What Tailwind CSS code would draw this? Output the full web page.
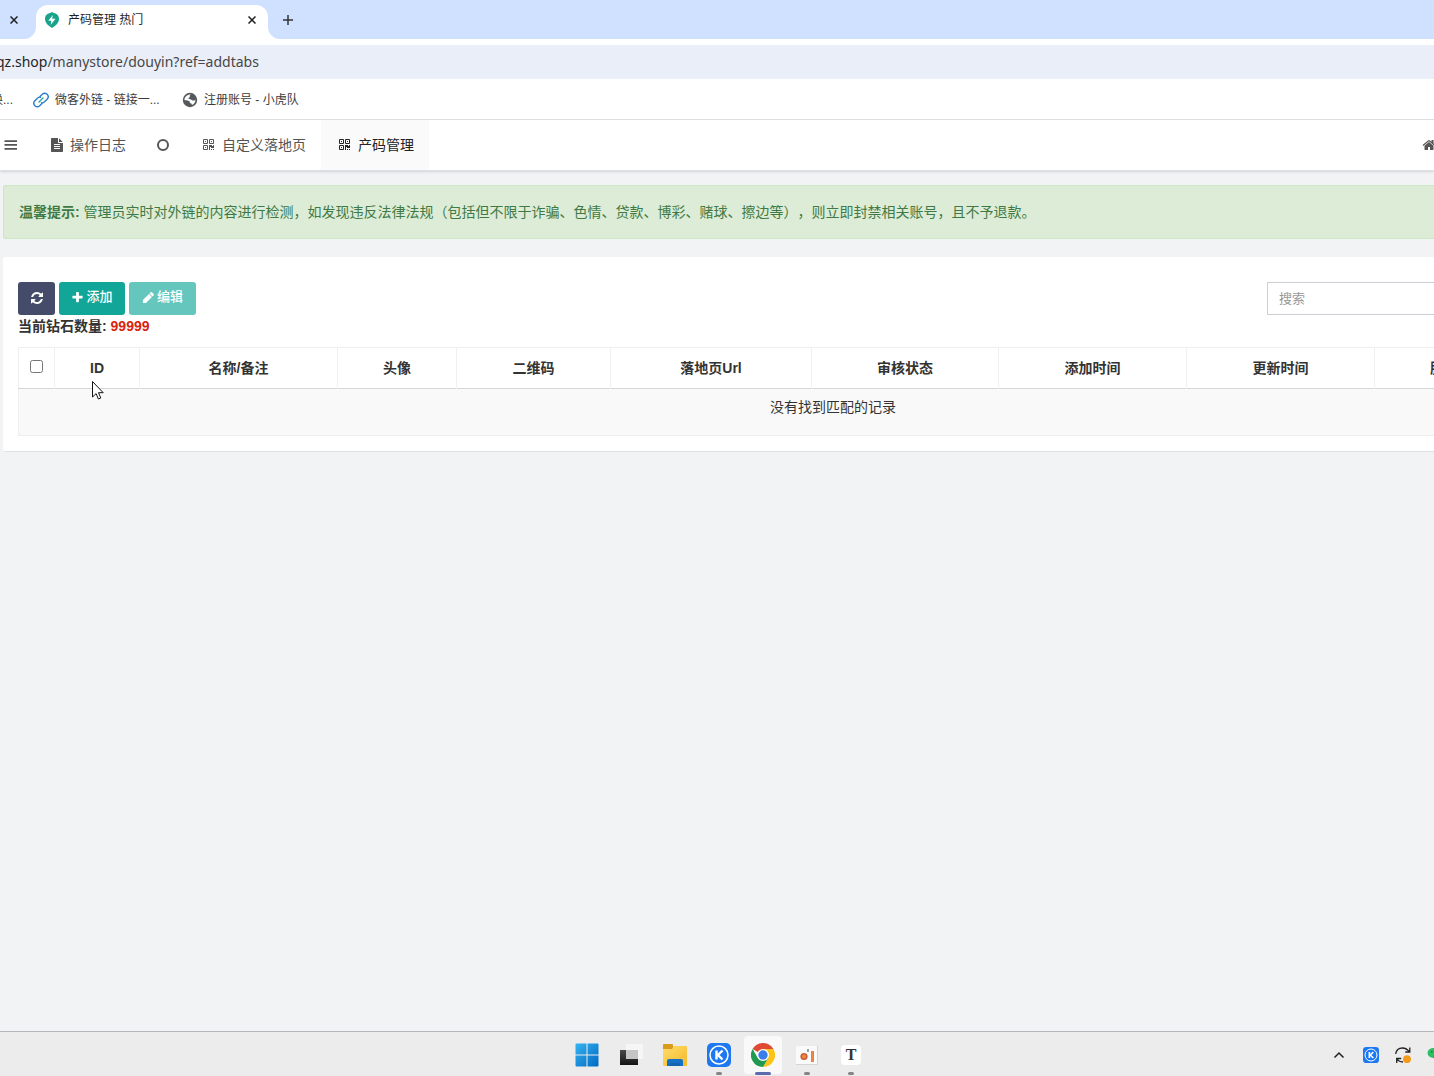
<!DOCTYPE html>
<html lang="zh-CN">
<head>
<meta charset="utf-8">
<title>产码管理 热门</title>
<script src="https://cdn.jsdelivr.net/npm/@tailwindcss/browser@4"></script>
</head>
<body class="flex h-screen flex-col overflow-hidden bg-[#f1f3f5] font-['Liberation_Sans','Noto_Sans_CJK_SC',sans-serif] text-sm text-[#333] [text-spacing-trim:space-all]">

<!-- icon set -->
<svg class="hidden" aria-hidden="true">
  <symbol id="qr" viewBox="0 0 12 12"><path fill="none" stroke="currentColor" d="M.5 .5h4v4h-4zM6.500 .5h4v4h-4zM.5 6.500h4v4h-4z"/><path fill="currentColor" d="M2 2h1v1H2zM8 2h1v1H8zM2 8h1v1H2zM6 6h3v1h1V6h1v3H8V8H7v3H6zM8 10h1v1H8zM10 10h1v1h-1z"/></symbol>
  <symbol id="close" viewBox="0 0 8 8"><path fill="none" stroke="currentColor" stroke-width="1.500" d="M.5 .5l7 7M7.500 .5l-7 7"/></symbol>
  <symbol id="kapp" viewBox="0 0 24 24"><rect width="24" height="24" rx="5" fill="#1e78f0"/><circle cx="12" cy="12" r="9" fill="none" stroke="#fff" stroke-width="1.500"/><path fill="none" stroke="#fff" stroke-width="2.400" d="M9.500 7.500v9M15.500 7.500L11 12l4.500 4.500"/></symbol>
</svg>

<header class="shrink-0">
  <!-- tab strip -->
  <div class="flex h-[39px] bg-white text-xs text-[#1f1f1f]">
    <div class="flex w-9 items-center rounded-br-xl bg-[#d0e1ff] pl-[10px]"><button aria-label="关闭上一标签"><svg class="size-2"><use href="#close"/></svg></button></div>
    <div class="flex w-[232px] bg-[#d0e1ff] pt-[5px] [background:linear-gradient(#d0e1ff_20px,#fff_20px)]">
      <div class="flex flex-1 items-center rounded-t-xl bg-white pb-[5px] pr-3 pl-2">
        <svg class="mr-2 h-4 w-4" viewBox="0 0 16 16"><path fill="#18a38b" d="M8 0l1.800 1C13 1.400 15 3.800 15 7c0 3.400-2.200 5.600-4.600 7.200L8 16l-2.400-1.800C3.200 12.600 1 10.400 1 7c0-3.200 2-5.600 5.200-6z"/><path fill="#fff" d="M8.800 3L4.300 8.800h3L6.700 13l4.800-6.200H8.200z"/></svg>
        <span class="flex-1">产码管理 热门</span>
        <button aria-label="关闭标签"><svg class="size-2"><use href="#close"/></svg></button>
      </div>
    </div>
    <div class="flex flex-1 rounded-bl-xl bg-[#d0e1ff] pl-[15px]">
      <button aria-label="新标签"><svg class="size-[10px]" viewBox="0 0 10 10"><path stroke="#333" stroke-width="1.500" d="M5 0v10M0 5h10"/></svg></button>
    </div>
  </div>
  <!-- address bar -->
  <div class="bg-white pt-[6px]">
    <div class="flex h-[34px] items-center overflow-hidden bg-[#e9eef8] font-['Noto_Sans',sans-serif] text-sm">
      <p class="-ml-1 whitespace-nowrap text-[#474747]"><span class="text-[#1f1f1f]">qz.shop</span>/manystore/douyin?ref=addtabs</p>
    </div>
  </div>
  <!-- bookmarks -->
  <nav class="flex h-[41px] items-center overflow-hidden border-b border-[#e0e2e6] bg-white pt-px text-xs text-[#3c3c3c]">
    <a href="#" class="-ml-3 w-[45px] whitespace-nowrap pl-[3px]">换...</a>
    <a href="#" class="flex w-[149px] items-center gap-[6px] whitespace-nowrap">
      <svg class="size-4" viewBox="0 0 16 16" fill="none" stroke="#2a7fd0" stroke-width="1.400" stroke-linecap="round"><path d="M7 4.500l2.300-2.200a3.500 3.500 0 0 1 4.800 0 3.500 3.500 0 0 1 0 4.900L11.500 9.800a3.500 3.500 0 0 1-3 1"/><path d="M9 11.500l-2.300 2.200a3.500 3.500 0 0 1-4.800 0 3.500 3.500 0 0 1 0-4.900l2.600-2.600a3.500 3.500 0 0 1 3-1"/><path stroke="#3a9" d="M6 10l4-4"/></svg>微客外链 - 链接一...</a>
    <a href="#" class="flex items-center gap-[6px] whitespace-nowrap">
      <svg class="size-4" viewBox="0 0 16 16"><circle cx="8" cy="8" r="7.200" fill="#55585c"/><path fill="#fff" d="M9 2.500c-1 .5-1.500 1-1.200 2 .3.800-.8 1-1.300 1.500-.4.600.3 1.200 1.500 1.200 1.500 0 1.500 1 2.500 1.300 1 .3 2-.2 3-.5a5.600 5.600 0 0 1-3.700 5c.2-1-.2-1.600-1.200-1.700-1.200-.1-.6-1.300-1-2C7 8.600 4.500 8.600 2.400 8 2.500 5 5 2.300 9 2.500z"/></svg>注册账号 - 小虎队</a>
  </nav>
</header>

<!-- page tabs -->
<nav class="flex h-[51px] shrink-0 items-stretch border-b border-[#dbe1e6] bg-white text-[#555] shadow-sm">
  <button aria-label="菜单" class="w-[33px] pl-1 text-left"><svg class="size-[14px]" viewBox="0 0 1792 1792" fill="currentColor"><path d="M64 1280h1600v220H64zM64 780h1600v220H64zM64 280h1600v220H64z"/></svg></button>
  <a href="#" class="flex items-center gap-1 px-[15px]"><svg class="mx-[2px] size-[14px]" viewBox="0 0 1792 1792" fill="currentColor"><path d="M1596 476q14 14 28 36h-472v-472q22 14 36 28zm-476 164h544v1056q0 40-28 68t-68 28h-1344q-40 0-68-28t-28-68v-1600q0-40 28-68t68-28h800v544q0 40 28 68t68 28zm160 736v-64q0-14-9-23t-23-9h-704q-14 0-23 9t-9 23v64q0 14 9 23t23 9h704q14 0 23-9t9-23zm0-256v-64q0-14-9-23t-23-9h-704q-14 0-23 9t-9 23v64q0 14 9 23t23 9h704q14 0 23-9t9-23zm0-256v-64q0-14-9-23t-23-9h-704q-14 0-23 9t-9 23v64q0 14 9 23t23 9h704q14 0 23-9t9-23z"/></svg>操作日志</a>
  <a href="#" aria-label="标签" class="flex items-center px-[15px]"><svg class="size-[14px]" viewBox="0 0 14 14"><circle cx="7" cy="7" r="5" fill="none" stroke="currentColor" stroke-width="2"/></svg></a>
  <a href="#" class="flex items-center gap-1 px-[15px]"><svg class="mx-[3px] size-3"><use href="#qr"/></svg>自定义落地页</a>
  <a href="#" class="flex items-center gap-1 bg-[#fafafa] px-[15px] text-[#222]"><svg class="mx-[3px] size-3"><use href="#qr"/></svg>产码管理</a>
  <a href="#" aria-label="主页" class="-mr-[2px] ml-auto flex items-center"><svg class="size-[14px]" viewBox="0 0 1792 1792" fill="currentColor"><path d="M1472 992v480q0 26-19 45t-45 19h-384v-384h-256v384h-384q-26 0-45-19t-19-45v-480q0-1 .5-3t.5-3l575-474 575 474q1 2 1 6zm223-69l-62 74q-8 9-21 11h-3q-13 0-21-7l-692-577-692 577q-12 8-24 7-13-2-21-11l-62-74q-8-10-7-23.500t11-21.500l719-599q32-26 76-26t76 26l244 204v-195q0-14 9-23t23-9h192q14 0 23 9t9 23v408l219 182q10 8 11 21.500t-7 23.500z"/></svg></a>
</nav>

<main class="min-h-0 flex-1 overflow-hidden pt-[14px] pl-[3px]">
  <div class="mb-[18px] flex h-[54px] items-center whitespace-nowrap rounded-l-[3px] border border-r-0 border-[#cfe6c6] bg-[#dcecd6] px-[15px] text-[#3f7a45]">
    <p><b>温馨提示:</b> 管理员实时对外链的内容进行检测，如发现违反法律法规（包括但不限于诈骗、色情、贷款、博彩、赌球、擦边等），则立即封禁相关账号，且不予退款。</p>
  </div>

  <section class="overflow-hidden rounded-l-[3px] border-b border-[#dfe2e5] bg-white pt-[25px] pb-[15px] pl-[15px]">
    <div class="flex justify-between">
      <div class="flex gap-1 text-[13px] font-medium text-white">
        <button aria-label="刷新" class="flex h-[33px] w-[37px] items-center justify-center rounded-[3px] bg-[#444c69] pb-[2px]"><svg class="size-[14px]" viewBox="0 0 1792 1792" fill="currentColor"><path d="M1639 1056q0 5-1 7-64 268-268 434.500t-478 166.500q-146 0-282.500-55t-243.500-157l-129 129q-19 19-45 19t-45-19-19-45v-448q0-26 19-45t45-19h448q26 0 45 19t19 45-19 45l-137 137q71 66 161 102t187 36q134 0 250-65t186-179q11-17 53-117 8-23 30-23h192q13 0 22.500 9.500t9.500 22.500zm25-800v448q0 26-19 45t-45 19h-448q-26 0-45-19t-19-45 19-45l138-138q-148-137-349-137-134 0-250 65t-186 179q-11 17-53 117-8 23-30 23h-199q-13 0-22.500-9.500t-9.500-22.500v-7q65-268 270-434.500t480-166.500q146 0 284 55.500t245 156.500l130-129q19-19 45-19t45 19 19 45z"/></svg></button>
        <button class="flex h-[33px] w-[66px] items-center justify-center gap-[2px] rounded-[3px] bg-[#11a698] pb-[2px]"><svg class="size-[13px]" viewBox="0 0 1792 1792" fill="currentColor"><path d="M1600 736v192q0 40-28 68t-68 28h-416v416q0 40-28 68t-68 28h-192q-40 0-68-28t-28-68v-416h-416q-40 0-68-28t-28-68v-192q0-40 28-68t68-28h416v-416q0-40 28-68t68-28h192q40 0 68 28t28 68v416h416q40 0 68 28t28 68z"/></svg>添加</button>
        <button class="flex h-[33px] w-[67px] items-center justify-center gap-[2px] rounded-[3px] bg-[#64c6bd] pb-[2px]"><svg class="size-[13px]" viewBox="0 0 1792 1792" fill="currentColor"><path d="M960 416l416 416-832 832h-416v-416zm683 96q0 53-37 90l-166 166-416-416 166-165q36-38 90-38 53 0 91 38l235 234q37 39 37 91z"/></svg>编辑</button>
      </div>
      <input type="text" aria-label="搜索" placeholder="搜索" class="-mr-1 h-[33px] w-[171px] border border-[#ccd0d4] bg-white px-[11px] text-[13px] placeholder:text-[#999]">
    </div>
    <p class="h-8 font-bold leading-[22px]">当前钻石数量: <span class="text-[#d9230f]">99999</span></p>

    <table class="w-[1630px] table-fixed border-collapse border border-[#eee] text-center">
      <colgroup><col class="w-9"><col class="w-[85px]"><col class="w-[198px]"><col class="w-[119px]"><col class="w-[154px]"><col class="w-[201px]"><col class="w-[187px]"><col class="w-[188px]"><col class="w-[188px]"><col></colgroup>
      <thead>
        <tr class="h-[41px] border-b border-[#d4d6d8] font-bold *:border-r *:border-[#f0f0f0]">
          <th><input type="checkbox" aria-label="全选" class="mx-auto mb-1 block size-[13px]"></th>
          <th>ID</th><th>名称/备注</th><th>头像</th><th>二维码</th><th>落地页Url</th><th>审核状态</th><th>添加时间</th><th>更新时间</th><th class="pl-[55px] text-left">服</th>
        </tr>
      </thead>
      <tbody><tr class="h-[47px] bg-[#f9f9f9]"><td colspan="10" class="pt-2 align-top">没有找到匹配的记录</td></tr></tbody>
    </table>
  </section>
</main>

<!-- mouse pointer -->
<svg class="absolute top-[380px] left-[91px] h-5 w-[13px]" viewBox="0 0 13 20"><path fill="#fff" stroke="#111" d="M1.500 1.500v15.500l3.600-3.400 2.300 5.400 2.400-1-2.300-5.300h4.700z"/></svg>

<footer class="relative flex h-[45px] shrink-0 items-center border-t border-[#b4b8bb] bg-[#ececec] pt-[2px]">
  <div class="flex flex-1 justify-center gap-[6px] pl-1 *:relative *:flex *:h-[38px] *:w-[38px] *:items-center *:justify-center *:rounded">
    <button aria-label="开始"><svg class="size-6" viewBox="0 0 24 24"><defs><linearGradient id="win" gradientUnits="userSpaceOnUse" x2="24" y2="24"><stop stop-color="#37b5f2"/><stop offset="1" stop-color="#0067c0"/></linearGradient></defs><path fill="url(#win)" d="M.5 1.500Q.5.500 1.500.500H11.500V11.500H.5zM12.500.500H22.500Q23.500.500 23.500 1.500V11.500H12.500zM.5 12.500H11.500V23.500H1.500Q.5 23.500.5 22.500zM12.500 12.500H23.500V22.500Q23.500 23.500 22.500 23.500H12.500z"/></svg></button>
    <button aria-label="任务视图"><svg class="size-6" viewBox="0 0 24 24"><defs><linearGradient id="tv" x2="0" y2="1"><stop stop-color="#484848"/><stop offset="1" stop-color="#151515"/></linearGradient></defs><path fill="url(#tv)" d="M1 7h18v15H1z"/><path fill="#f6f6f6" d="M7 1h17v15H7z"/><path fill="#c4c4c4" d="M7 7h12v9H7z"/></svg></button>
    <button aria-label="文件资源管理器"><svg class="h-6 w-[26px]" viewBox="0 0 26 24"><defs><linearGradient id="fold" x2="1" y2="1"><stop stop-color="#ffdc6b"/><stop offset="1" stop-color="#f5b92b"/></linearGradient></defs><path fill="#d99b1c" d="M1 2q0-1 1-1h8q1 0 1 1v4H1z"/><path fill="url(#fold)" d="M1 6h9l2-3h12q1 0 1 1v18q0 1-1 1H2q-1 0-1-1z"/><path fill="#1571c4" d="M5 23v-5q0-2 2-2h12q2 0 2 2v5z"/><path fill="#0f559c" d="M8 20h10v3H8z" opacity=".5"/></svg></button>
    <button aria-label="K"><svg class="size-6"><use href="#kapp"/></svg><i class="absolute -bottom-px h-[3px] w-[6px] rounded-full bg-[#858585]"></i></button>
    <button aria-label="Chrome" class="bg-[#f9f9f9]"><svg class="size-6" viewBox="0 0 24 24"><path fill="#e04a35" d="M12 12L1.600 6A12 12 0 0 1 22.400 6z"/><path fill="#fbc416" d="M12 12V6h10.400A12 12 0 0 1 12 24l5.200-9z"/><path fill="#1f9a50" d="M12 12l5.200 3L12 24A12 12 0 0 1 1.600 6l5.200 9z"/><circle cx="12" cy="12" r="6" fill="#fff"/><circle cx="12" cy="12" r="4.700" fill="#3a7ded"/></svg><i class="absolute -bottom-px h-[3px] w-4 rounded-full bg-[#5c6bab]"></i></button>
    <button aria-label="录屏"><svg class="size-6" viewBox="0 0 24 24"><rect x="1" y="3" width="22" height="19" rx="1" fill="#d5d5d5"/><rect x="1" y="3" width="21" height="18" rx="1" fill="#fafafa"/><circle cx="9" cy="13.500" r="3.600" fill="#c75f38"/><circle cx="9" cy="13.500" r="2" fill="#ef8a3c"/><path fill="#e8843e" d="M16 8h3v11h-3z"/><path fill="#9aa0a8" d="M12 6h2v3h-2z"/></svg><i class="absolute -bottom-px h-[3px] w-[6px] rounded-full bg-[#858585]"></i></button>
    <button aria-label="Typora"><span class="flex h-5 w-5 items-center justify-center rounded bg-white font-['Liberation_Serif',serif] text-base font-bold text-[#333]">T</span><i class="absolute -bottom-px h-[3px] w-[6px] rounded-full bg-[#858585]"></i></button>
  </div>
  <div class="absolute -right-[9px] flex items-center gap-4">
    <button aria-label="显示隐藏的图标"><svg class="h-4 w-3" viewBox="0 0 12 16"><path fill="none" stroke="#222" stroke-width="1.500" d="M1.500 10.500L6 6l4.500 4.500"/></svg></button>
    <button aria-label="K 托盘"><svg class="ml-[2px] size-4"><use href="#kapp"/></svg></button>
    <button aria-label="更新"><svg class="size-4" viewBox="0 0 16 16"><path fill="none" stroke="#222" stroke-width="1.300" d="M.7 7Q1.500 1 7.500 1q4 0 7 4M14.800 .5v4.500h-4.500M1.700 16v-4.500h4.500M2 12q2 3 6 3"/><circle cx="12" cy="12.200" r="3.900" fill="#f39a1c"/></svg></button>
    <button aria-label="微信"><svg class="size-4" viewBox="0 0 16 16"><ellipse cx="6.500" cy="6" rx="6" ry="5" fill="#2dbd63"/><ellipse cx="11" cy="10" rx="4.500" ry="4" fill="#28a757"/><path fill="#187c3e" d="M4 4h1.500v1.500H4z"/></svg></button>
  </div>
</footer>
</body>
</html>
